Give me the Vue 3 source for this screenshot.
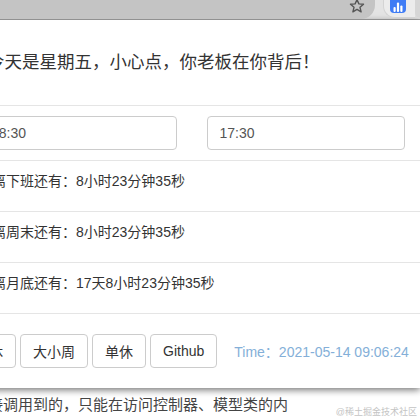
<template>
  <div class="page">
    <div class="chrome">
      <div class="omnibox">
        <svg class="star" width="16" height="16" viewBox="0 0 16 16"><path d="M8 1.6l1.9 4.3 4.6.4-3.5 3 1.1 4.5L8 11.4l-4.1 2.4L5 9.3l-3.5-3 4.6-.4z" fill="none" stroke="#555" stroke-width="1.4" stroke-linejoin="round"/></svg>
      </div>
      <div class="ext">
        <div class="ext-btn">
          <svg width="10" height="10" viewBox="0 0 10 10"><rect x="0.5" y="5" width="2.2" height="5" rx="1" fill="#fff"/><rect x="3.9" y="0.5" width="2.2" height="9.5" rx="1" fill="#fff"/><rect x="7.3" y="3.5" width="2.2" height="6.5" rx="1" fill="#fff"/></svg>
        </div>
      </div>
      <div class="ext-next"></div>
    </div>
    <div class="modal">
      <div class="head">今天是星期五，小心点，你老板在你背后！</div>
      <div class="inputs">
        <div class="input">08:30</div>
        <div class="input">17:30</div>
      </div>
      <div v-for="r in rows" :key="r" class="row">{{ r }}</div>
      <div class="foot">
        <button class="btn">双休</button>
        <button v-for="b in buttons" :key="b" class="btn">{{ b }}</button>
        <span class="time">Time：2021-05-14 09:06:24</span>
      </div>
    </div>
    <div class="behind">接调用到的，只能在访问控制器、模型类的内</div>
    <div class="mark">@稀土掘金技术社区</div>
  </div>
</template>

<script setup>
const rows = ['距离下班还有：8小时23分钟35秒', '距离周末还有：8小时23分钟35秒', '距离月底还有：17天8小时23分钟35秒']
const buttons = ['大小周', '单休', 'Github']
</script>

<style>
html, body { margin: 0; background: #fff; }
</style>
<style scoped>
.page {
  position: relative;
  width: 420px;
  height: 420px;
  overflow: hidden;
  background: #fff;
  font-family: "Liberation Sans", "Noto Sans CJK SC", sans-serif;
  color: #333;
}
.chrome {
  display: flex;
  height: 20px;
  box-sizing: border-box;
  background: #e4e4e4;
  border-bottom: 1px solid #a9a9a9;
}
.omnibox {
  flex: 0 0 375px;
  box-sizing: border-box;
  height: 19px;
  padding-right: 10px;
  display: flex;
  justify-content: flex-end;
  align-items: center;
  background: #c4c4c4;
  border-radius: 0 0 14px 0;
}
.star { margin-top: -8px; }
.ext {
  flex: 0 0 32px;
  box-sizing: border-box;
  height: 18px;
  margin-left: 8px;
  padding-left: 6px;
  background: #ececec;
  border: 1px solid #d4d4d4;
  border-width: 0 0 1px 1px;
  border-radius: 0 0 0 12px;
}
.ext-btn {
  width: 16px;
  height: 13px;
  background: #3f7cf5;
  border-radius: 0 0 4px 4px;
  display: flex;
  align-items: center;
  justify-content: center;
}
.ext-next {
  flex: 1;
  height: 18px;
  background: #d6d6d6;
  border-radius: 0 0 0 10px;
}
.modal {
  width: 458px;
  margin-left: -38px;
  background: #fff;
  box-shadow: 0 2px 7px rgba(0, 0, 0, 0.55);
}
.head {
  height: 86px;
  box-sizing: border-box;
  padding: 30px 0 0 25px;
  font-size: 17.5px;
  line-height: 25px;
  border-bottom: 1px solid #e5e5e5;
}
.inputs {
  display: flex;
  gap: 30px;
  height: 55px;
  box-sizing: border-box;
  padding: 10px 0 0 16px;
  border-bottom: 1px solid #e5e5e5;
}
.input {
  flex: 0 0 198.5px;
  height: 34px;
  box-sizing: border-box;
  border: 1px solid #ccc;
  border-radius: 4px;
  padding: 6px 12px;
  font-size: 14px;
  line-height: 20px;
  color: #555;
}
.row {
  height: 51px;
  box-sizing: border-box;
  padding: 11px 0 0 16px;
  font-size: 14px;
  line-height: 18px;
  border-bottom: 1px solid #e5e5e5;
}
.foot {
  display: flex;
  align-items: center;
  gap: 4px;
  height: 74px;
}
.btn {
  flex: none;
  height: 34px;
  padding: 6px 12px;
  background: #fff;
  border: 1px solid #ccc;
  border-radius: 4px;
  font: inherit;
  font-size: 14px;
  color: #333;
}
.time {
  margin-left: 13px;
  font-size: 14px;
  white-space: nowrap;
  color: #84afd8;
}
.behind {
  margin: 7px 0 0 -12px;
  font-size: 15px;
  line-height: 20px;
  color: #444;
  white-space: nowrap;
}
.mark {
  position: absolute;
  right: 3px;
  bottom: 2px;
  font-size: 9px;
  color: #c4c4c4;
}
</style>
